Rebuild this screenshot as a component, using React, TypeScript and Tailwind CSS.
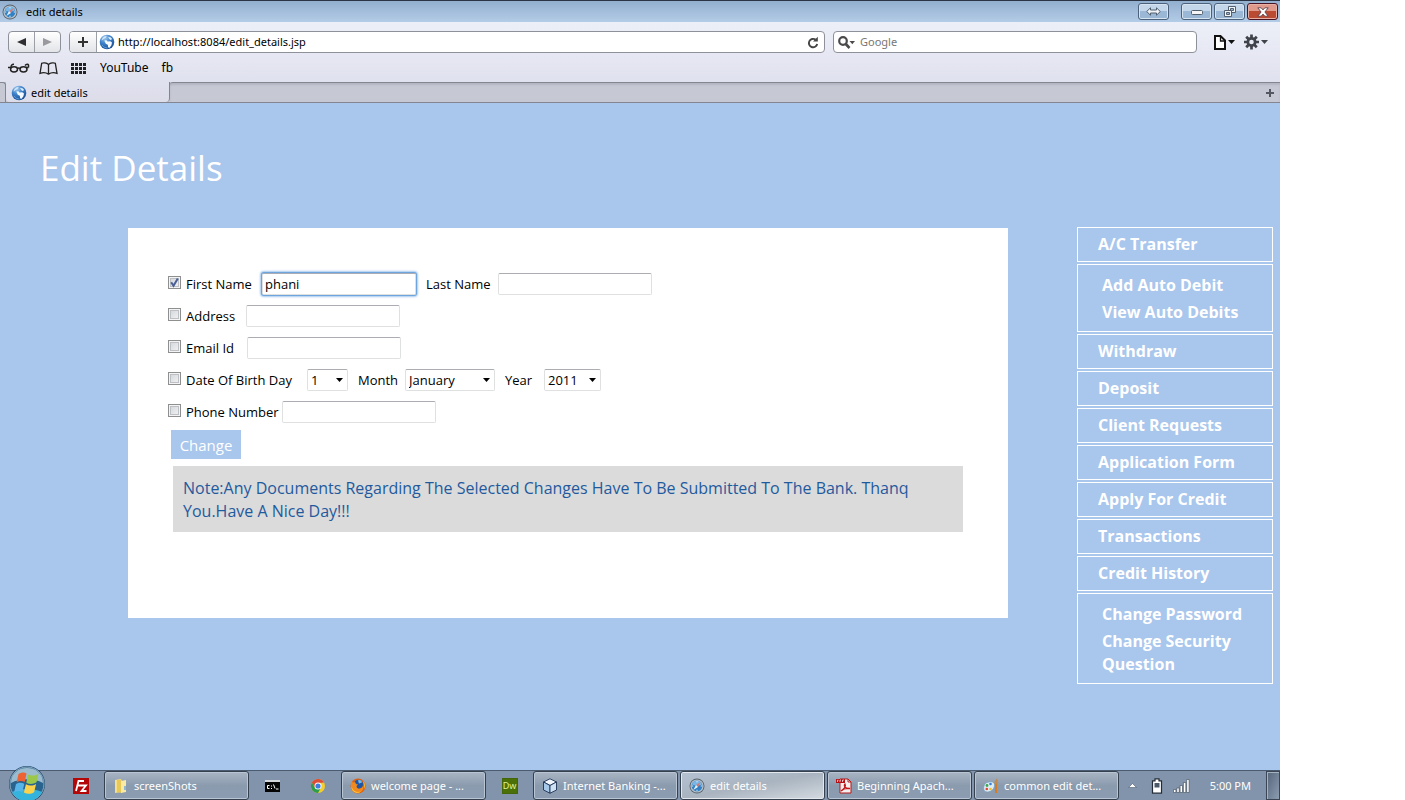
import React, { useId, useState } from "react";

const UI = "font-['Segoe_UI','Noto_Sans',sans-serif]";
const COMIC = "font-['Comic_Sans_MS','Open_Sans',sans-serif]";

function Compass() {
  return (
    <svg width="16" height="16" viewBox="0 0 16 16" aria-hidden="true">
      <circle cx="8" cy="8" r="7.5" fill="#55606c" />
      <circle cx="8" cy="8" r="6.600" fill="#b9c2ca" />
      <circle cx="8" cy="8" r="5.400" fill="#2f80c4" />
      <path d="M3 6.500a5.200 5.200 0 0 1 10 0c-3 1.500-7 1.500-10 0z" fill="#79b8e6" />
      <path d="M8 2.800v1.500M8 11.700v1.500M2.800 8h1.500M11.700 8h1.500" stroke="#e8f4fc" strokeWidth="0.9" />
      <path d="M11.700 4L9 9 7 7z" fill="#d9776f" />
      <path d="M4.300 12L7 7l2 2z" fill="#e9f1f8" />
    </svg>
  );
}

function Globe() {
  const id = useId();
  return (
    <svg width="16" height="16" viewBox="0 0 16 16" aria-hidden="true">
      <defs>
        <radialGradient id={id} cx="0.35" cy="0.2" r="0.85">
          <stop offset="0" stopColor="#a8cff0" />
          <stop offset="0.45" stopColor="#3f83cb" />
          <stop offset="1" stopColor="#174a8f" />
        </radialGradient>
      </defs>
      <circle cx="8" cy="8" r="7.300" fill={"url(#" + id + ")"} />
      <path d="M2.500 6.500C3 4 5 2.300 7.500 2c0 1.200-1 2-2.200 2.600z" fill="#d3e8fa" />
      <path d="M9 3l2.500.2 1.700 1.800-1.500 1-1.200-.8z" fill="#dcedfb" />
      <path d="M5.300 6.500l2.200-.3 1 1.300 2.700-.3 1.800 1.400-.6 2.600-1.800 2.600-1.400-.4-.4-2.600-2-1z" fill="#f4faff" />
      <path d="M3 11c1.500 2.200 3.500 3 5.500 3" stroke="#5c9fdd" fill="none" />
    </svg>
  );
}

const capButton = "flex h-[17px] items-center justify-center rounded-[3px] border border-[#4c617b] bg-linear-to-b from-[#c3d6ea] from-50% to-[#9ab7d5] to-50% shadow-[inset_0_0_0_1px_#d6e4f2]";

function TitleBar() {
  return (
    <header className="flex h-[22px] items-center border-t border-[#2a3443] bg-linear-to-b from-[#93afcf] to-[#b3cce7] pl-[2px] pr-[2px]">
      <Compass />
      <h2 className="ml-2 flex-1 text-[11px] leading-4 text-black">edit details</h2>
      <button aria-label="Resize" className={capButton + " mr-3 w-[31px]"}>
        <svg width="15" height="9" viewBox="0 0 15 9"><path d="M.7 4.500L4.500.8v2.200h6V.8l3.800 3.700-3.800 3.700V6h-6v2.200z" fill="#eef3f8" stroke="#53606f" /></svg>
      </button>
      <div className="flex gap-[2px]">
        <button aria-label="Minimize" className={capButton + " w-[31px]"}>
          <svg width="12" height="6" viewBox="0 0 12 6"><rect x=".5" y="1.500" width="11" height="4" rx="1" fill="#f6f6f6" stroke="#53606f" /></svg>
        </button>
        <button aria-label="Restore" className={capButton + " w-[31px]"}>
          <svg width="12" height="12" viewBox="0 0 12 12" fill="#f3f6f9" stroke="#53606f"><path d="M4.500.5h7v6h-7z" /><path d="M6.500 2.500h3v2h-3z" fill="#9ab7d5" /><path d="M.5 4.500h7v6h-7z" /><path d="M2.500 6.500h3v2h-3z" fill="#9ab7d5" /></svg>
        </button>
        <button aria-label="Close" className="flex h-[17px] w-[31px] items-center justify-center rounded-[3px] border border-[#471523] bg-linear-to-b from-[#e09a8c] from-45% to-[#bb4a33] to-50% shadow-[inset_0_0_0_1px_#e8b0a4]">
          <svg width="12" height="10" viewBox="0 0 12 10"><path d="M.8.8h3.400L6 2.900 7.800.8h3.400L7.900 5l3.300 4.200H7.800L6 7.100 4.200 9.200H.8L4.100 5z" fill="#fff" stroke="#5d4148" strokeWidth=".9" /></svg>
        </button>
      </div>
    </header>
  );
}

function Toolbar() {
  return (
    <div className="bg-linear-to-b from-[#edeff8] to-[#e0e1ee] px-2 pt-[9px]">
      <div className="flex h-[22px] items-stretch">
        <div className="flex w-[53px] rounded-[4px] border border-[#8e9199] bg-linear-to-b from-white to-[#e3e4e8]">
          <button aria-label="Back" className="flex flex-1 items-center justify-center border-r border-[#9c9fa6]">
            <svg width="9" height="8"><path d="M9 0v8L0 4z" fill="#2f2f33" /></svg>
          </button>
          <button aria-label="Forward" className="flex flex-1 items-center justify-center">
            <svg width="9" height="8"><path d="M0 0v8l9-4z" fill="#9a9a9e" /></svg>
          </button>
        </div>
        <div className="ml-2 flex min-w-0 flex-1 items-stretch overflow-hidden rounded-[4px] border border-[#8e9199] bg-white">
          <button aria-label="Add bookmark" className="flex w-[27px] items-center justify-center border-r border-[#9c9fa6] bg-linear-to-b from-white to-[#e3e4e8]">
            <svg width="10" height="10"><path d="M5 0v10M0 5h10" stroke="#333" strokeWidth="2" /></svg>
          </button>
          <div className="flex flex-1 items-center gap-[3px] pl-[2px] pr-[5px]">
            <Globe />
            <input aria-label="Address" defaultValue="http://localhost:8084/edit_details.jsp" className="min-w-0 flex-1 text-[11px] leading-4 text-black outline-none" />
            <button aria-label="Reload">
              <svg width="12" height="13" viewBox="0 0 12 13"><path d="M8.500 3.600A4.200 4.200 0 1 0 10.200 8" fill="none" stroke="#444" strokeWidth="1.900" /><path d="M6 5.500h4.800V.8z" fill="#444" /></svg>
            </button>
          </div>
        </div>
        <div className="ml-2 flex w-[364px] items-center rounded-[4px] border border-[#8e9199] bg-white pl-1">
          <svg width="18" height="13" viewBox="0 0 18 13"><circle cx="5" cy="5" r="3.800" fill="none" stroke="#4a4a4a" strokeWidth="2.200" /><path d="M7.800 8l3.700 4" stroke="#4a4a4a" strokeWidth="2.600" /><path d="M11.500 5H17l-2.700 3.300z" fill="#4a4a4a" /></svg>
          <input aria-label="Search" placeholder="Google" className="ml-1 min-w-0 flex-1 text-[11px] leading-4 outline-none placeholder:text-[#777]" />
        </div>
        <div className="ml-4 mr-1 flex items-center gap-[9px]">
          <button aria-label="Page menu">
            <svg width="22" height="15" viewBox="0 0 22 15"><path d="M2 1h5.500L12 5.500V14H2z" fill="#fff" stroke="#111" strokeWidth="2" /><path d="M7.500 1v5H12" fill="none" stroke="#111" strokeWidth="1.300" /><path d="M15 5h7l-3.500 4z" fill="#111" /></svg>
          </button>
          <button aria-label="Settings menu">
            <svg width="24" height="16" viewBox="0 0 24 16"><g stroke="#41434a" strokeWidth="2.700"><path d="M7.500.5v15M0 8h15M2.200 2.700l10.600 10.600M12.800 2.700L2.200 13.300" /></g><circle cx="7.500" cy="8" r="5" fill="#41434a" /><circle cx="7.500" cy="8" r="2.300" fill="#e9eaf4" /><path d="M17 6h7l-3.500 4z" fill="#41434a" /></svg>
          </button>
        </div>
      </div>
      <nav aria-label="Bookmarks" className="mt-[3px] flex h-[26px] items-center pb-[2px] text-[12px] leading-4 text-black">
        <svg width="22" height="10" viewBox="0 0 22 10" fill="none" stroke="#222" strokeWidth="1.500"><ellipse cx="6" cy="6.300" rx="3.500" ry="2.600" /><ellipse cx="15.500" cy="6.300" rx="3.500" ry="2.600" /><path d="M9.500 5.500c.7-.8 1.800-.8 2.500 0M0 4.500h3.500M18 4.500h2.500M3 4.500C3 2 4 1.200 6 1.300M17 2.500C18.500.8 20 .8 20.500 2v2.500" /></svg>
        <svg className="ml-[9px]" width="19" height="13" viewBox="0 0 19 13" fill="none" stroke="#222" strokeWidth="1.300"><path d="M9.500 2.500C7.500.6 4 .5 2.700 1.200L1 11.300c2.500-.8 6-.8 8.500.8 2.500-1.600 6-1.600 8.500-.8L16.300 1.200C15 .5 11.500.6 9.500 2.500zM9.500 2.500v9.500" /></svg>
        <svg className="ml-[13px]" width="15" height="11" viewBox="0 0 15 11" fill="#222">
          {[0, 4, 8].map((y) => [0, 4, 8, 12].map((x) => <rect key={x + "-" + y} x={x} y={y} width="3" height="3" />))}
        </svg>
        <a href="#youtube" className="ml-[14px]">YouTube</a>
        <a href="#fb" className="ml-[13px]">fb</a>
      </nav>
    </div>
  );
}

function TabStrip() {
  return (
    <div className="flex h-[21px] items-stretch border-b border-[#83868f] bg-[#c6c8d4]">
      <div className="w-[6px] rounded-tr-[3px] border-t border-r border-[#83868f]" />
      <div role="tab" aria-selected="true" className="flex w-[164px] items-center gap-1 rounded-b-[4px] border-r border-[#83868f] bg-linear-to-b from-[#e0e1ee] to-[#dcdde9] pl-[5px] pt-px text-[11px] leading-4 text-black">
        <Globe />
        <span>edit details</span>
      </div>
      <div className="flex flex-1 items-center justify-end rounded-tl-[3px] border-t border-[#83868f] pr-[6px] shadow-[inset_0_2px_2px_#b4b6c2]">
        <button aria-label="New tab">
          <svg width="8" height="8"><path d="M4 0v8M0 4h8" stroke="#555861" strokeWidth="2" /></svg>
        </button>
      </div>
    </div>
  );
}

const box = "h-[22px] border border-[#dfe1e1] border-t-[#abadb3] bg-white text-[13px] leading-4 text-black";

function Check({ label, width, on = false }: { label: string; width: string; on?: boolean }) {
  const id = useId();
  const [checked, setChecked] = useState(on);
  return (
    <span className="mr-[10px] flex items-center gap-[5px]">
      <span className="-mt-1 grid size-[13px]">
        <input id={id} type="checkbox" checked={checked} onChange={(e) => setChecked(e.target.checked)} className="col-start-1 row-start-1 size-[13px] appearance-none border border-[#8e8f8f] bg-linear-to-br from-[#cfd3d8] to-[#f6f6f6] shadow-[inset_0_0_0_1px_#f4f4f4,inset_0_0_0_2px_#bcc0c5]" />
        {checked && (
          <svg className="pointer-events-none col-start-1 row-start-1" width="13" height="13" viewBox="0 0 13 13"><path d="M3.200 6.200l2.300 3.600L9.800 2.600" fill="none" stroke="#4a5f97" strokeWidth="2" /></svg>
        )}
      </span>
      <label htmlFor={id} className={"whitespace-nowrap " + width}>{label}</label>
    </span>
  );
}

function Field({ label, className = "", value = "" }: { label: string; className?: string; value?: string }) {
  return <input aria-label={label} defaultValue={value} className={box + " w-[154px] rounded-[2px] px-[2px] outline-none " + className} />;
}

function Select({ label, options, className }: { label: string; options: string[]; className: string }) {
  return (
    <span className="grid items-center">
      <select aria-label={label} className={box + " col-start-1 row-start-1 appearance-none rounded-[2px] pl-[3px] outline-none " + className}>
        {options.map((o) => <option key={o}>{o}</option>)}
      </select>
      <svg className="pointer-events-none col-start-1 row-start-1 mr-[5px] justify-self-end" width="7" height="4"><path d="M0 0h7L3.500 4z" fill="#000" /></svg>
    </span>
  );
}

const row = "flex h-8 items-center";
const caption = "mx-[10px] whitespace-nowrap";

function EditForm() {
  return (
    <form onSubmit={(e) => e.preventDefault()} className="min-h-[390px] min-w-0 flex-1 bg-white px-10 pt-10 text-[13px] leading-5 text-black">
      <div className={row}>
        <Check label="First Name" width="w-[66px]" on />
        <Field label="First name" value="phani" className="border-[#5b9ad9] border-t-[#5b9ad9] shadow-[0_0_0_1px_#6ea5de,0_0_2px_2px_#a6c9ee]" />
        <span className={caption + " w-[62px]"}>Last Name</span>
        <Field label="Last name" />
      </div>
      <div className={row}><Check label="Address" width="w-[50px]" /><Field label="Address" /></div>
      <div className={row}><Check label="Email Id" width="w-[51px]" /><Field label="Email id" /></div>
      <div className={row}>
        <Check label="Date Of Birth Day" width="w-[111px]" />
        <Select label="Day" options={["1", "2", "3"]} className="w-[41px]" />
        <span className={caption + " w-[37px]"}>Month</span>
        <Select label="Month" options={["January", "February", "March"]} className="w-[90px]" />
        <span className={caption + " w-[29px]"}>Year</span>
        <Select label="Year" options={["2011", "2012"]} className="w-[57px]" />
      </div>
      <div className={row}><Check label="Phone Number" width="w-[86px]" /><Field label="Phone number" /></div>
      <button className="ml-[3px] mt-[2px] block h-[29px] w-[70px] bg-[#a9c6ec] text-[15px] leading-5 text-white">Change</button>
      <p className="mx-[5px] mt-[7px] bg-[#dbdbdb] px-[10px] pb-[9px] pt-[11px] text-[16px] leading-[23px] text-[#1f5a9e]">
        Note:Any Documents Regarding The Selected Changes Have To Be Submitted To The Bank. Thanq You.Have A Nice Day!!!
      </p>
    </form>
  );
}

const menu: string[][] = [
  ["A/C Transfer"],
  ["Add Auto Debit", "View Auto Debits"],
  ["Withdraw"],
  ["Deposit"],
  ["Client Requests"],
  ["Application Form"],
  ["Apply For Credit"],
  ["Transactions"],
  ["Credit History"],
  ["Change Password", "Change Security Question"],
];

function SideMenu() {
  return (
    <nav aria-label="Account" className="-mt-px flex w-[196px] flex-col gap-[2px] text-[16px] font-bold leading-[23px] text-white">
      {menu.map((group) =>
        group.length === 1 ? (
          <a key={group[0]} href="#menu" className="flex h-[35px] items-center border border-white px-5">{group[0]}</a>
        ) : (
          <div key={group[0]} className="flex flex-col gap-1 border border-white px-6 pb-[7px] pt-[9px]">
            {group.map((g) => <a key={g} href="#menu">{g}</a>)}
          </div>
        )
      )}
    </nav>
  );
}

function Orb() {
  return (
    <svg width="38" height="38" viewBox="0 0 38 38" aria-hidden="true">
      <circle cx="19" cy="19" r="18" fill="#1d4769" />
      <circle cx="19" cy="19" r="17" fill="#29648e" stroke="#a9c3d6" strokeWidth=".8" />
      <path d="M4 27c8-4 22-4 30 0a17 17 0 0 1-30 0z" fill="#34b4dd" />
      <path d="M3 18C3 9 10 3 19 3s16 6 16 15c-9-5-23-5-32 0z" fill="#9bbccf" />
      <path d="M10.500 9c3-2 6-2 8-.5l-1.800 8.500c-3-1.500-5-1.500-8 .3z" fill="#ed6334" />
      <path d="M20 9.500c3 1.700 7 1.400 10.500-.8l-2 8.500c-3.500 2.200-7 2.200-10.200.5z" fill="#9bc74a" />
      <path d="M8 19c3-1.800 5.500-1.600 8.300-.3l-1.900 8.300c-2.500-1.300-5.300-1.400-8.300.4z" fill="#58b5ea" />
      <path d="M17.900 19.300c3.200 1.700 7 1.600 10.200-.3l-2 8.300c-3.400 2-7 1.900-10.200.3z" fill="#fbd24c" />
    </svg>
  );
}

const FileZilla = () => (
  <svg width="16" height="16" viewBox="0 0 16 16"><rect width="16" height="16" fill="#b40707" /><path d="M3 13L5.500 3H11M4.500 7.500h4M8 7.500h5L8.500 13h5" fill="none" stroke="#fff" strokeWidth="1.800" /></svg>
);
const Folder = () => (
  <svg width="16" height="16" viewBox="0 0 16 16"><path d="M2 2l6-1v13l-6 1z" fill="#f6df87" /><path d="M4 2l5-.5V15l-5-1z" fill="#e8c958" /><path d="M8 3l5-1v12l-5 1z" fill="#f9eaa6" /><path d="M11 8h2v4h-2z" fill="#92b7ce" /></svg>
);
const Cmd = () => (
  <svg width="15" height="12" viewBox="0 0 15 12"><rect width="15" height="12" fill="#050505" /><rect width="15" height="2" fill="#d4d8dc" /><path d="M4.500 5.500H2.500v3h2M6.500 5.500v1M6.500 8v1M8.500 4.500l1.500 4M11 9h2.500" stroke="#fff" fill="none" /></svg>
);
const Chrome = () => (
  <svg width="16" height="16" viewBox="0 0 16 16"><circle cx="8" cy="8" r="7" fill="#f5ce2e" /><path d="M1.900 4.500A7 7 0 0 1 14.100 4.500L8 5 5 10z" fill="#dd4b39" /><path d="M1.900 4.500A7 7 0 0 0 8 15l2.800-5L5 9.700z" fill="#2f9c4b" /><circle cx="8" cy="8" r="3.500" fill="#fff" /><circle cx="8" cy="8" r="2.600" fill="#3d7de0" /></svg>
);
const Firefox = () => (
  <svg width="16" height="16" viewBox="0 0 16 16"><circle cx="8" cy="8" r="7.500" fill="#e0600f" /><circle cx="8.500" cy="6.300" r="4.600" fill="#1e56a3" /><path d="M8 2.500c2-1 4 0 4 2l-3 1z" fill="#71bbec" /><path d="M1 3l2 1.500 2-.5 1 2 2 .5-1.500 1.500c0 3 4 4 7 0 .5 4-2.500 7-6 7-4 0-7-4-6.500-8z" fill="#f08a20" /><path d="M13 3c2 2 2.500 5 1 8 .2-3 0-5-1-8zM1.500 9C3 13 7 15 11 13.500 7 17 1 13 1.500 9z" fill="#fbc93a" /></svg>
);
const Dw = () => (
  <span className="flex size-4 items-center justify-center border border-[#43660b] bg-[#4b7007] text-[9px] leading-3 text-[#dff29c]">Dw</span>
);
const Cube = () => (
  <svg width="16" height="16" viewBox="0 0 16 16" stroke="#1d3152" strokeWidth=".9" strokeLinejoin="round"><path d="M8 .8L14.500 4 8 7.500 1.500 4z" fill="#f1f7fd" /><path d="M1.500 4L8 7.500v7.700L1.500 12z" fill="#a6c9e9" /><path d="M14.500 4L8 7.500v7.700l6.500-3.200z" fill="#cfe2f4" /></svg>
);
const Pdf = () => (
  <svg width="16" height="16" viewBox="0 0 16 16"><path d="M4 1h8l3 3v11H4z" fill="#f4eeee" stroke="#b11b1b" /><path d="M12 1v3h3" fill="none" stroke="#b11b1b" /><path d="M0 1h9v4H0z" fill="#b80f14" /><path d="M1.500 4V2.200h1M4 4V2h1M6.500 4V2h1.500" stroke="#fff" strokeWidth=".7" fill="none" /><path d="M5 13c3-2 5-5 4-7-2 2 1 5 5 4.500-4-.5-7 .5-9 2.500z" fill="none" stroke="#c0171b" strokeWidth="1.300" /></svg>
);
const Paint = () => (
  <svg width="16" height="16" viewBox="0 0 16 16"><path d="M6 4c4-1 6 1 5.500 4S8 14 4.500 14 0 11 1 8s2-3.400 5-4z" fill="#dcecf7" stroke="#6f9bb9" strokeWidth=".7" /><circle cx="4" cy="7.500" r="1.400" fill="#3fa64a" /><circle cx="7.500" cy="6" r="1.300" fill="#3b7fd4" /><circle cx="3.800" cy="11" r="1.300" fill="#e3452f" /><circle cx="7.500" cy="11" r="1.300" fill="#f3bd2c" /><path d="M13 6v9" stroke="#d77a20" strokeWidth="2" /><path d="M11.500 6c0-2 0-3 2.500-5.500.8 2 .8 4 .5 5.500z" fill="#c58a4a" /></svg>
);

function Slot({ label, children }: { label: string; children: React.ReactNode }) {
  return <button aria-label={label} className="flex h-[30px] w-[43px] items-center justify-center">{children}</button>;
}

function Task({ icon, text, active = false }: { icon: React.ReactNode; text: string; active?: boolean }) {
  return (
    <button className={"flex h-[29px] w-[145px] items-center gap-[5px] rounded-[3px] border border-[#35414f] pl-[8px] text-left " + (active ? "bg-linear-to-br from-[#b4c1d1] via-[#a9b4c0] to-[#d4dae0] shadow-[inset_0_0_0_1px_#e2e8ee]" : "bg-linear-to-b from-[#a9b5c4] via-[#8b9bae] to-[#8b9cb2] shadow-[inset_0_0_0_1px_#b9c5d3]")}>
      {icon}
      <span className="whitespace-nowrap">{text}</span>
    </button>
  );
}

function Taskbar() {
  return (
    <footer className="flex h-[30px] items-center gap-[2px] border-t border-[#4c5c70] bg-[#8294ab] text-[11px] leading-4 text-white">
      <button aria-label="Start" className="-mt-[4px] flex h-[30px] w-[57px] items-start pl-2"><span className="-mt-1 h-[35px] overflow-hidden"><Orb /></span></button>
      <Slot label="FileZilla"><FileZilla /></Slot>
      <Task icon={<Folder />} text="screenShots" />
      <Slot label="Command prompt"><Cmd /></Slot>
      <Slot label="Chrome"><Chrome /></Slot>
      <Task icon={<Firefox />} text="welcome page - ..." />
      <Slot label="Dreamweaver"><Dw /></Slot>
      <Task icon={<Cube />} text="Internet Banking -..." />
      <Task icon={<Compass />} text="edit details" active />
      <Task icon={<Pdf />} text="Beginning Apach..." />
      <Task icon={<Paint />} text="common edit det..." />
      <div className="flex flex-1 items-center justify-end gap-[10px]">
        <svg width="9" height="5" viewBox="0 0 9 5"><path d="M.5 4.500L4.500.5l4 4z" fill="#fff" stroke="#4c5c70" strokeWidth=".6" /></svg>
        <svg className="ml-1" width="12" height="16" viewBox="0 0 12 16"><path d="M4 .8h4v2h2.500v12.400h-9V2.800H4z" fill="#fff" stroke="#222b36" strokeWidth="1.200" /><path d="M3.500 5h5v4.500h-5z" fill="#4b5869" /></svg>
        <svg width="17" height="14" viewBox="0 0 17 14" fill="#fff" stroke="#3a4655" strokeWidth=".6"><path d="M.5 10.500h2.400v3H.5zM3.800 9h2.400v4.500H3.800zM7.100 6.500h2.400v7H7.100zM10.400 3.500h2.400v10h-2.400zM13.700.5h2.400v13h-2.400z" /></svg>
        <time className="ml-[10px] mr-[5px] whitespace-nowrap">5:00 PM</time>
        <button aria-label="Show desktop" className="h-[29px] w-[14px] border border-[#3a4655] bg-linear-to-br from-[#55657a] to-[#8d9db1] shadow-[inset_1px_1px_0_#a5b2c2]" />
      </div>
    </footer>
  );
}

export default function App() {
  return (
    <div className="min-h-screen bg-white pr-[125px]">
      <div className={"flex min-h-screen flex-col bg-[#a9c6ec] " + UI}>
        <TitleBar />
        <Toolbar />
        <TabStrip />
        <main className={"flex-1 " + COMIC}>
          <h1 className="px-10 pt-10 text-[35px] font-medium leading-[50px] text-white">Edit Details</h1>
          <div className="flex items-start gap-[69px] pb-10 pl-32 pr-[7px] pt-[35px]">
            <EditForm />
            <SideMenu />
          </div>
        </main>
        <Taskbar />
      </div>
    </div>
  );
}
